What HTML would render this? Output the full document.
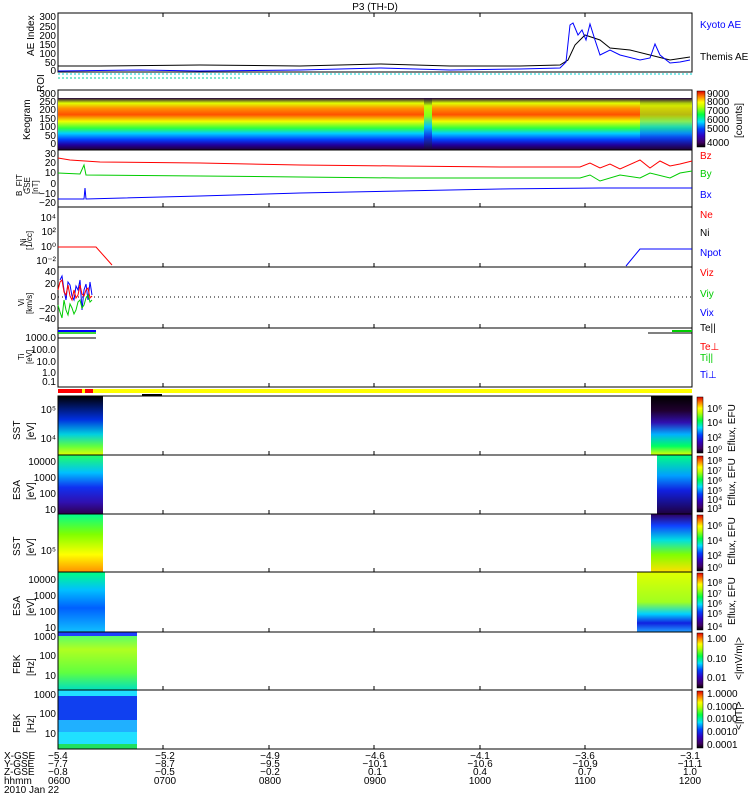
<!DOCTYPE html>
<html><head><meta charset="utf-8"><style>
body{margin:0;background:#fff;width:750px;height:800px;overflow:hidden}
svg{display:block;font-family:"Liberation Sans",sans-serif}
text{font-size:10px;fill:#000}
</style></head><body>
<svg width="750" height="800" viewBox="0 0 750 800">
<defs>
<linearGradient id="rb" x1="0" y1="1" x2="0" y2="0">
<stop offset="0" stop-color="#000"/><stop offset="0.08" stop-color="#400060"/><stop offset="0.2" stop-color="#3000c0"/><stop offset="0.32" stop-color="#0040ff"/><stop offset="0.45" stop-color="#00e0ff"/><stop offset="0.58" stop-color="#00ff40"/><stop offset="0.72" stop-color="#c0ff00"/><stop offset="0.8" stop-color="#ffff00"/><stop offset="0.9" stop-color="#ff8000"/><stop offset="1" stop-color="#e00000"/></linearGradient>
<linearGradient id="keo" x1="0" y1="0" x2="0" y2="1">
<stop offset="0" stop-color="#200040"/><stop offset="0.1" stop-color="#e0ff00"/><stop offset="0.2" stop-color="#ff9000"/><stop offset="0.32" stop-color="#ff5000"/><stop offset="0.45" stop-color="#f0ff00"/><stop offset="0.58" stop-color="#30ff40"/><stop offset="0.68" stop-color="#00d0ff"/><stop offset="0.8" stop-color="#0040ff"/><stop offset="0.9" stop-color="#2000a0"/><stop offset="1" stop-color="#200030"/></linearGradient>
<linearGradient id="keod" x1="0" y1="0" x2="0" y2="1">
<stop offset="0" stop-color="#200040"/><stop offset="0.15" stop-color="#c0ff00"/><stop offset="0.35" stop-color="#80ff20"/><stop offset="0.55" stop-color="#00c0ff"/><stop offset="0.75" stop-color="#1030e0"/><stop offset="1" stop-color="#200030"/></linearGradient>
<linearGradient id="sst1" x1="0" y1="0" x2="0" y2="1"><stop offset="0" stop-color="#000"/><stop offset="0.4" stop-color="#0030e0"/><stop offset="0.65" stop-color="#00d0e0"/><stop offset="0.85" stop-color="#60ff40"/><stop offset="1" stop-color="#e0ff00"/></linearGradient>
<linearGradient id="esa1" x1="0" y1="0" x2="0" y2="1"><stop offset="0" stop-color="#20ff60"/><stop offset="0.3" stop-color="#00c0ff"/><stop offset="0.55" stop-color="#1030f0"/><stop offset="0.8" stop-color="#3010b0"/><stop offset="1" stop-color="#300050"/></linearGradient>
<linearGradient id="sst2" x1="0" y1="0" x2="0" y2="1"><stop offset="0" stop-color="#00ff90"/><stop offset="0.35" stop-color="#80ff00"/><stop offset="0.7" stop-color="#ffff00"/><stop offset="1" stop-color="#ff9000"/></linearGradient>
<linearGradient id="esa2" x1="0" y1="0" x2="0" y2="1"><stop offset="0" stop-color="#00ff80"/><stop offset="0.3" stop-color="#00c0ff"/><stop offset="0.6" stop-color="#0060ff"/><stop offset="1" stop-color="#10c0ff"/></linearGradient>
<linearGradient id="esa2r" x1="0" y1="0" x2="0" y2="1"><stop offset="0" stop-color="#e0ff00"/><stop offset="0.5" stop-color="#a0ff20"/><stop offset="0.7" stop-color="#00d0ff"/><stop offset="0.85" stop-color="#1020e0"/><stop offset="1" stop-color="#20a0ff"/></linearGradient>
<linearGradient id="sst1r" x1="0" y1="0" x2="0" y2="1"><stop offset="0" stop-color="#000"/><stop offset="0.25" stop-color="#200030"/><stop offset="0.45" stop-color="#3010b0"/><stop offset="0.65" stop-color="#00b0ff"/><stop offset="0.85" stop-color="#00ff60"/><stop offset="1" stop-color="#e0ff00"/></linearGradient>
<linearGradient id="esa1r" x1="0" y1="0" x2="0" y2="1"><stop offset="0" stop-color="#00ff80"/><stop offset="0.35" stop-color="#00a0ff"/><stop offset="0.6" stop-color="#1020e0"/><stop offset="1" stop-color="#200040"/></linearGradient>
<linearGradient id="sst2r" x1="0" y1="0" x2="0" y2="1"><stop offset="0" stop-color="#300060"/><stop offset="0.2" stop-color="#1040ff"/><stop offset="0.45" stop-color="#00e0e0"/><stop offset="0.7" stop-color="#80ff00"/><stop offset="1" stop-color="#ffe000"/></linearGradient>
<linearGradient id="fbk1" x1="0" y1="0" x2="0" y2="1"><stop offset="0" stop-color="#40ff80"/><stop offset="0.3" stop-color="#b0ff20"/><stop offset="0.7" stop-color="#60ff40"/><stop offset="1" stop-color="#00e0c0"/></linearGradient>
</defs>

<text x="375" y="10" text-anchor="middle">P3 (TH-D)</text>

<!-- AE panel -->
<rect x="58" y="13" width="634" height="59" fill="none" stroke="#000"/>
<polyline fill="none" stroke="#000" points="58,66 100,66 200,65 300,66 380,64 450,66 520,66 560,65 568,60 575,45 585,35 600,40 610,48 630,50 650,55 670,60 690,57"/>
<polyline fill="none" stroke="#00f" points="58,71 140,70 200,71 300,70 380,68 450,70 520,69 560,68 566,62 570,25 573,23 578,35 582,30 586,40 590,24 595,40 600,55 610,50 620,55 640,60 650,58 655,44 660,55 670,63 680,62 690,60"/>
<text x="700" y="28" style="fill:#00f">Kyoto AE</text>
<text x="700" y="60">Themis AE</text>
<g text-anchor="end"><text x="56" y="20">300</text><text x="56" y="30">250</text><text x="56" y="39">200</text><text x="56" y="48">150</text><text x="56" y="57">100</text><text x="56" y="66">50</text><text x="56" y="74">0</text></g>
<text transform="translate(34,56) rotate(-90)">AE Index</text>
<line x1="58" y1="74" x2="692" y2="74" stroke="#00d0d0" stroke-dasharray="2,2"/>
<line x1="58" y1="78" x2="240" y2="78" stroke="#00d0a0" stroke-dasharray="2,2"/>
<text transform="translate(44,92) rotate(-90)">ROI</text>

<!-- Keogram -->
<rect x="58" y="90" width="634" height="60" fill="none" stroke="#000"/>
<rect x="58" y="98" width="634" height="52" fill="url(#keo)"/>
<rect x="424" y="98" width="8" height="52" fill="url(#keod)"/>
<rect x="640" y="98" width="52" height="52" fill="url(#keod)" opacity="0.6"/>
<g text-anchor="end"><text x="56" y="97">300</text><text x="56" y="105">250</text><text x="56" y="113">200</text><text x="56" y="122">150</text><text x="56" y="130">100</text><text x="56" y="139">50</text><text x="56" y="147">0</text></g>
<text transform="translate(30,140) rotate(-90)">Keogram</text>
<rect x="697" y="91" width="8" height="56" fill="url(#rb)" stroke="#000" stroke-width="0.5"/>
<g><text x="707" y="97">9000</text><text x="707" y="105">8000</text><text x="707" y="114">7000</text><text x="707" y="123">6000</text><text x="707" y="132">5000</text><text x="707" y="146">4000</text></g>
<text transform="translate(742,138) rotate(-90)">[counts]</text>

<!-- B panel -->
<rect x="58" y="150" width="634" height="57" fill="none" stroke="#000"/>
<polyline fill="none" stroke="#f00" points="58,158 70,160 100,162 200,163 300,165 400,166 500,167 580,167 590,163 600,168 610,164 620,169 640,160 650,168 660,161 670,166 680,164 692,161"/>
<polyline fill="none" stroke="#0c0" points="58,173 80,174 84,165 86,175 200,176 300,177 400,178 500,178 580,178 590,175 600,181 620,175 640,178 650,173 670,178 680,173 692,171"/>
<polyline fill="none" stroke="#00f" points="58,199 84,199 85,188 86,199 200,196 300,193 400,191 500,189 600,188 692,188"/>
<text x="700" y="159" style="fill:#f00">Bz</text><text x="700" y="177" style="fill:#0c0">By</text><text x="700" y="198" style="fill:#00f">Bx</text>
<g text-anchor="end"><text x="56" y="157">30</text><text x="56" y="166">20</text><text x="56" y="176">10</text><text x="56" y="187">0</text><text x="56" y="197">−10</text><text x="56" y="206">−20</text></g>
<text transform="translate(22,196) rotate(-90)" style="font-size:8px">B_FIT</text>
<text transform="translate(30,194) rotate(-90)" style="font-size:8px">GSE</text>
<text transform="translate(38,194) rotate(-90)" style="font-size:8px">[nT]</text>

<!-- Ni -->
<rect x="58" y="207" width="634" height="60" fill="none" stroke="#000"/>
<polyline fill="none" stroke="#f00" points="58,247 96,247 112,265"/>
<polyline fill="none" stroke="#00f" points="626,266 640,249 692,249"/>
<text x="700" y="218" style="fill:#f00">Ne</text><text x="700" y="236">Ni</text><text x="700" y="256" style="fill:#00f">Npot</text>
<g text-anchor="end"><text x="56" y="221">10⁴</text><text x="56" y="235">10²</text><text x="56" y="250">10⁰</text><text x="56" y="264">10⁻²</text></g>
<text transform="translate(26,246) rotate(-90)" style="font-size:8px">Ni</text>
<text transform="translate(32,250) rotate(-90)" style="font-size:8px">[1/cc]</text>

<!-- Vi -->
<rect x="58" y="267" width="634" height="61" fill="none" stroke="#000"/>
<line x1="58" y1="297" x2="692" y2="297" stroke="#000" stroke-dasharray="1,3"/>
<polyline fill="none" stroke="#00f" points="60,280 62,276 64,290 66,300 68,282 70,285 72,296 74,300 76,286 78,290 80,280 82,310 84,290 86,284 88,300 90,282 92,295"/>
<polyline fill="none" stroke="#0c0" points="58,305 60,312 62,318 64,300 66,310 68,315 70,304 72,308 74,314 76,310 78,302 80,300 82,308 84,305 86,298 88,295 90,302 92,300"/>
<polyline fill="none" stroke="#f00" points="58,290 60,282 62,280 64,292 66,295 68,285 70,296 72,300 74,290 76,298 78,295 80,285 82,294 84,296 86,290 88,288 90,298 92,296"/>
<text x="700" y="276" style="fill:#f00">Viz</text><text x="700" y="297" style="fill:#0c0">Viy</text><text x="700" y="316" style="fill:#00f">Vix</text>
<g text-anchor="end"><text x="56" y="275">40</text><text x="56" y="287">20</text><text x="56" y="300">0</text><text x="56" y="312">−20</text><text x="56" y="322">−40</text></g>
<text transform="translate(24,306) rotate(-90)" style="font-size:8px">Vi</text>
<text transform="translate(32,314) rotate(-90)" style="font-size:8px">[km/s]</text>

<!-- Ti -->
<rect x="58" y="328" width="634" height="59" fill="none" stroke="#000"/>
<line x1="58" y1="331" x2="96" y2="331" stroke="#00f" stroke-width="2"/>
<line x1="58" y1="333" x2="96" y2="333" stroke="#0c0" stroke-width="1.5"/>
<line x1="58" y1="338" x2="96" y2="338" stroke="#000"/>
<line x1="648" y1="333" x2="692" y2="333" stroke="#000"/>
<line x1="672" y1="331" x2="692" y2="331" stroke="#0c0" stroke-width="2"/>
<text x="700" y="331">Te||</text><text x="700" y="350" style="fill:#f00">Te⊥</text><text x="700" y="361" style="fill:#0c0">Ti||</text><text x="700" y="378" style="fill:#00f">Ti⊥</text>
<g text-anchor="end"><text x="56" y="341">1000.0</text><text x="56" y="353">100.0</text><text x="56" y="365">10.0</text><text x="56" y="376">1.0</text><text x="56" y="385">0.1</text></g>
<text transform="translate(24,360) rotate(-90)" style="font-size:8px">Ti</text>
<text transform="translate(32,364) rotate(-90)" style="font-size:8px">[eV]</text>

<!-- status bar -->
<rect x="58" y="389" width="634" height="4" fill="#ff0"/>
<rect x="58" y="389" width="24" height="4" fill="#f00"/>
<rect x="85" y="389" width="8" height="4" fill="#f00"/>
<rect x="142" y="394" width="20" height="2" fill="#000"/>

<!-- spectrograms -->
<rect x="58" y="396" width="45" height="59" fill="url(#sst1)"/>
<rect x="651" y="396" width="41" height="59" fill="url(#sst1r)"/>
<rect x="58" y="455" width="45" height="59" fill="url(#esa1)"/>
<rect x="657" y="455" width="35" height="59" fill="url(#esa1r)"/>
<rect x="58" y="514" width="45" height="58" fill="url(#sst2)"/>
<rect x="651" y="514" width="41" height="58" fill="url(#sst2r)"/>
<rect x="58" y="572" width="47" height="60" fill="url(#esa2)"/>
<rect x="637" y="572" width="55" height="60" fill="url(#esa2r)"/>
<rect x="58" y="632" width="79" height="58" fill="url(#fbk1)"/>
<rect x="58" y="632" width="79" height="4" fill="#2040ff"/>
<rect x="58" y="690" width="79" height="6" fill="#20e0ff"/>
<rect x="58" y="696" width="79" height="24" fill="#1040f0"/>
<rect x="58" y="720" width="79" height="12" fill="#20b0ff"/>
<rect x="58" y="732" width="79" height="12" fill="#20e0ff"/>
<rect x="58" y="744" width="79" height="5" fill="#20e060"/>
<g fill="none" stroke="#000">
<rect x="58" y="396" width="634" height="59"/><rect x="58" y="455" width="634" height="59"/><rect x="58" y="514" width="634" height="58"/><rect x="58" y="572" width="634" height="60"/><rect x="58" y="632" width="634" height="58"/><rect x="58" y="690" width="634" height="59"/>
</g>
<!-- time ticks -->
<g stroke="#000">
<path d="M163,745v4M269,745v4M374,745v4M480,745v4M585,745v4M163,686v4M269,686v4M374,686v4M480,686v4M585,686v4M163,628v4M269,628v4M374,628v4M480,628v4M585,628v4M163,568v4M269,568v4M374,568v4M480,568v4M585,568v4M163,510v4M269,510v4M374,510v4M480,510v4M585,510v4M163,451v4M269,451v4M374,451v4M480,451v4M585,451v4M163,383v4M269,383v4M374,383v4M480,383v4M585,383v4M163,324v4M269,324v4M374,324v4M480,324v4M585,324v4M163,263v4M269,263v4M374,263v4M480,263v4M585,263v4M163,203v4M269,203v4M374,203v4M480,203v4M585,203v4M163,13v4M269,13v4M374,13v4M480,13v4M585,13v4"/>
</g>
<g fill="url(#rb)" stroke="#000" stroke-width="0.5">
<rect x="697" y="397" width="6" height="56"/><rect x="697" y="456" width="6" height="56"/><rect x="697" y="515" width="6" height="56"/><rect x="697" y="573" width="6" height="57"/><rect x="697" y="633" width="6" height="55"/><rect x="697" y="691" width="6" height="57"/>
</g>
<g style="font-size:9px">
<text x="707" y="412">10⁶</text><text x="707" y="426">10⁴</text><text x="707" y="441">10²</text><text x="707" y="453">10⁰</text>
<text x="707" y="464">10⁸</text><text x="707" y="474">10⁷</text><text x="707" y="484">10⁶</text><text x="707" y="494">10⁵</text><text x="707" y="503">10⁴</text><text x="707" y="512">10³</text>
<text x="707" y="529">10⁶</text><text x="707" y="544">10⁴</text><text x="707" y="559">10²</text><text x="707" y="571">10⁰</text>
<text x="707" y="586">10⁸</text><text x="707" y="597">10⁷</text><text x="707" y="607">10⁶</text><text x="707" y="617">10⁵</text><text x="707" y="630">10⁴</text>
<text x="707" y="642">1.00</text><text x="707" y="662">0.10</text><text x="707" y="681">0.01</text>
<text x="707" y="697">1.0000</text><text x="707" y="710">0.1000</text><text x="707" y="722">0.0100</text><text x="707" y="735">0.0010</text><text x="707" y="748">0.0001</text>
</g>
<g style="font-size:9px">
<text transform="translate(735,452) rotate(-90)">Eflux, EFU</text>
<text transform="translate(735,506) rotate(-90)">Eflux, EFU</text>
<text transform="translate(735,565) rotate(-90)">Eflux, EFU</text>
<text transform="translate(735,625) rotate(-90)">Eflux, EFU</text>
<text transform="translate(742,680) rotate(-90)">&lt;|mV/m|&gt;</text>
<text transform="translate(742,730) rotate(-90)">&lt;|nT|&gt;</text>
</g>
<g text-anchor="end">
<text x="56" y="413">10⁵</text><text x="56" y="442">10⁴</text>
<text x="56" y="465">10000</text><text x="56" y="481">1000</text><text x="56" y="497">100</text><text x="56" y="513">10</text>
<text x="56" y="554">10⁵</text>
<text x="56" y="583">10000</text><text x="56" y="599">1000</text><text x="56" y="615">100</text><text x="56" y="631">10</text>
<text x="56" y="640">1000</text><text x="56" y="659">100</text><text x="56" y="679">10</text>
<text x="56" y="698">1000</text><text x="56" y="717">100</text><text x="56" y="737">10</text>
</g>
<g style="font-size:8px">
<text transform="translate(20,440) rotate(-90)">SST</text><text transform="translate(34,440) rotate(-90)">[eV]</text>
<text transform="translate(20,500) rotate(-90)">ESA</text><text transform="translate(34,500) rotate(-90)">[eV]</text>
<text transform="translate(20,556) rotate(-90)">SST</text><text transform="translate(34,556) rotate(-90)">[eV]</text>
<text transform="translate(20,616) rotate(-90)">ESA</text><text transform="translate(34,616) rotate(-90)">[eV]</text>
<text transform="translate(20,674) rotate(-90)">FBK</text><text transform="translate(34,676) rotate(-90)">[Hz]</text>
<text transform="translate(20,733) rotate(-90)">FBK</text><text transform="translate(34,733) rotate(-90)">[Hz]</text>
</g>

<!-- bottom labels -->
<g style="font-size:9px">
<text x="4" y="759">X-GSE</text><text x="4" y="767">Y-GSE</text><text x="4" y="775">Z-GSE</text><text x="4" y="784">hhmm</text><text x="4" y="793">2010 Jan 22</text>
<g><text x="48" y="759">−5.4</text><text x="48" y="767">−7.7</text><text x="48" y="775">−0.8</text><text x="48" y="784">0600</text></g>
<g text-anchor="middle">
<text x="165" y="759">−5.2</text><text x="165" y="767">−8.7</text><text x="165" y="775">−0.5</text><text x="165" y="784">0700</text>
<text x="270" y="759">−4.9</text><text x="270" y="767">−9.5</text><text x="270" y="775">−0.2</text><text x="270" y="784">0800</text>
<text x="375" y="759">−4.6</text><text x="375" y="767">−10.1</text><text x="375" y="775">0.1</text><text x="375" y="784">0900</text>
<text x="480" y="759">−4.1</text><text x="480" y="767">−10.6</text><text x="480" y="775">0.4</text><text x="480" y="784">1000</text>
<text x="585" y="759">−3.6</text><text x="585" y="767">−10.9</text><text x="585" y="775">0.7</text><text x="585" y="784">1100</text>
<text x="690" y="759">−3.1</text><text x="690" y="767">−11.1</text><text x="690" y="775">1.0</text><text x="690" y="784">1200</text>
</g></g>
</svg>
</body></html>
